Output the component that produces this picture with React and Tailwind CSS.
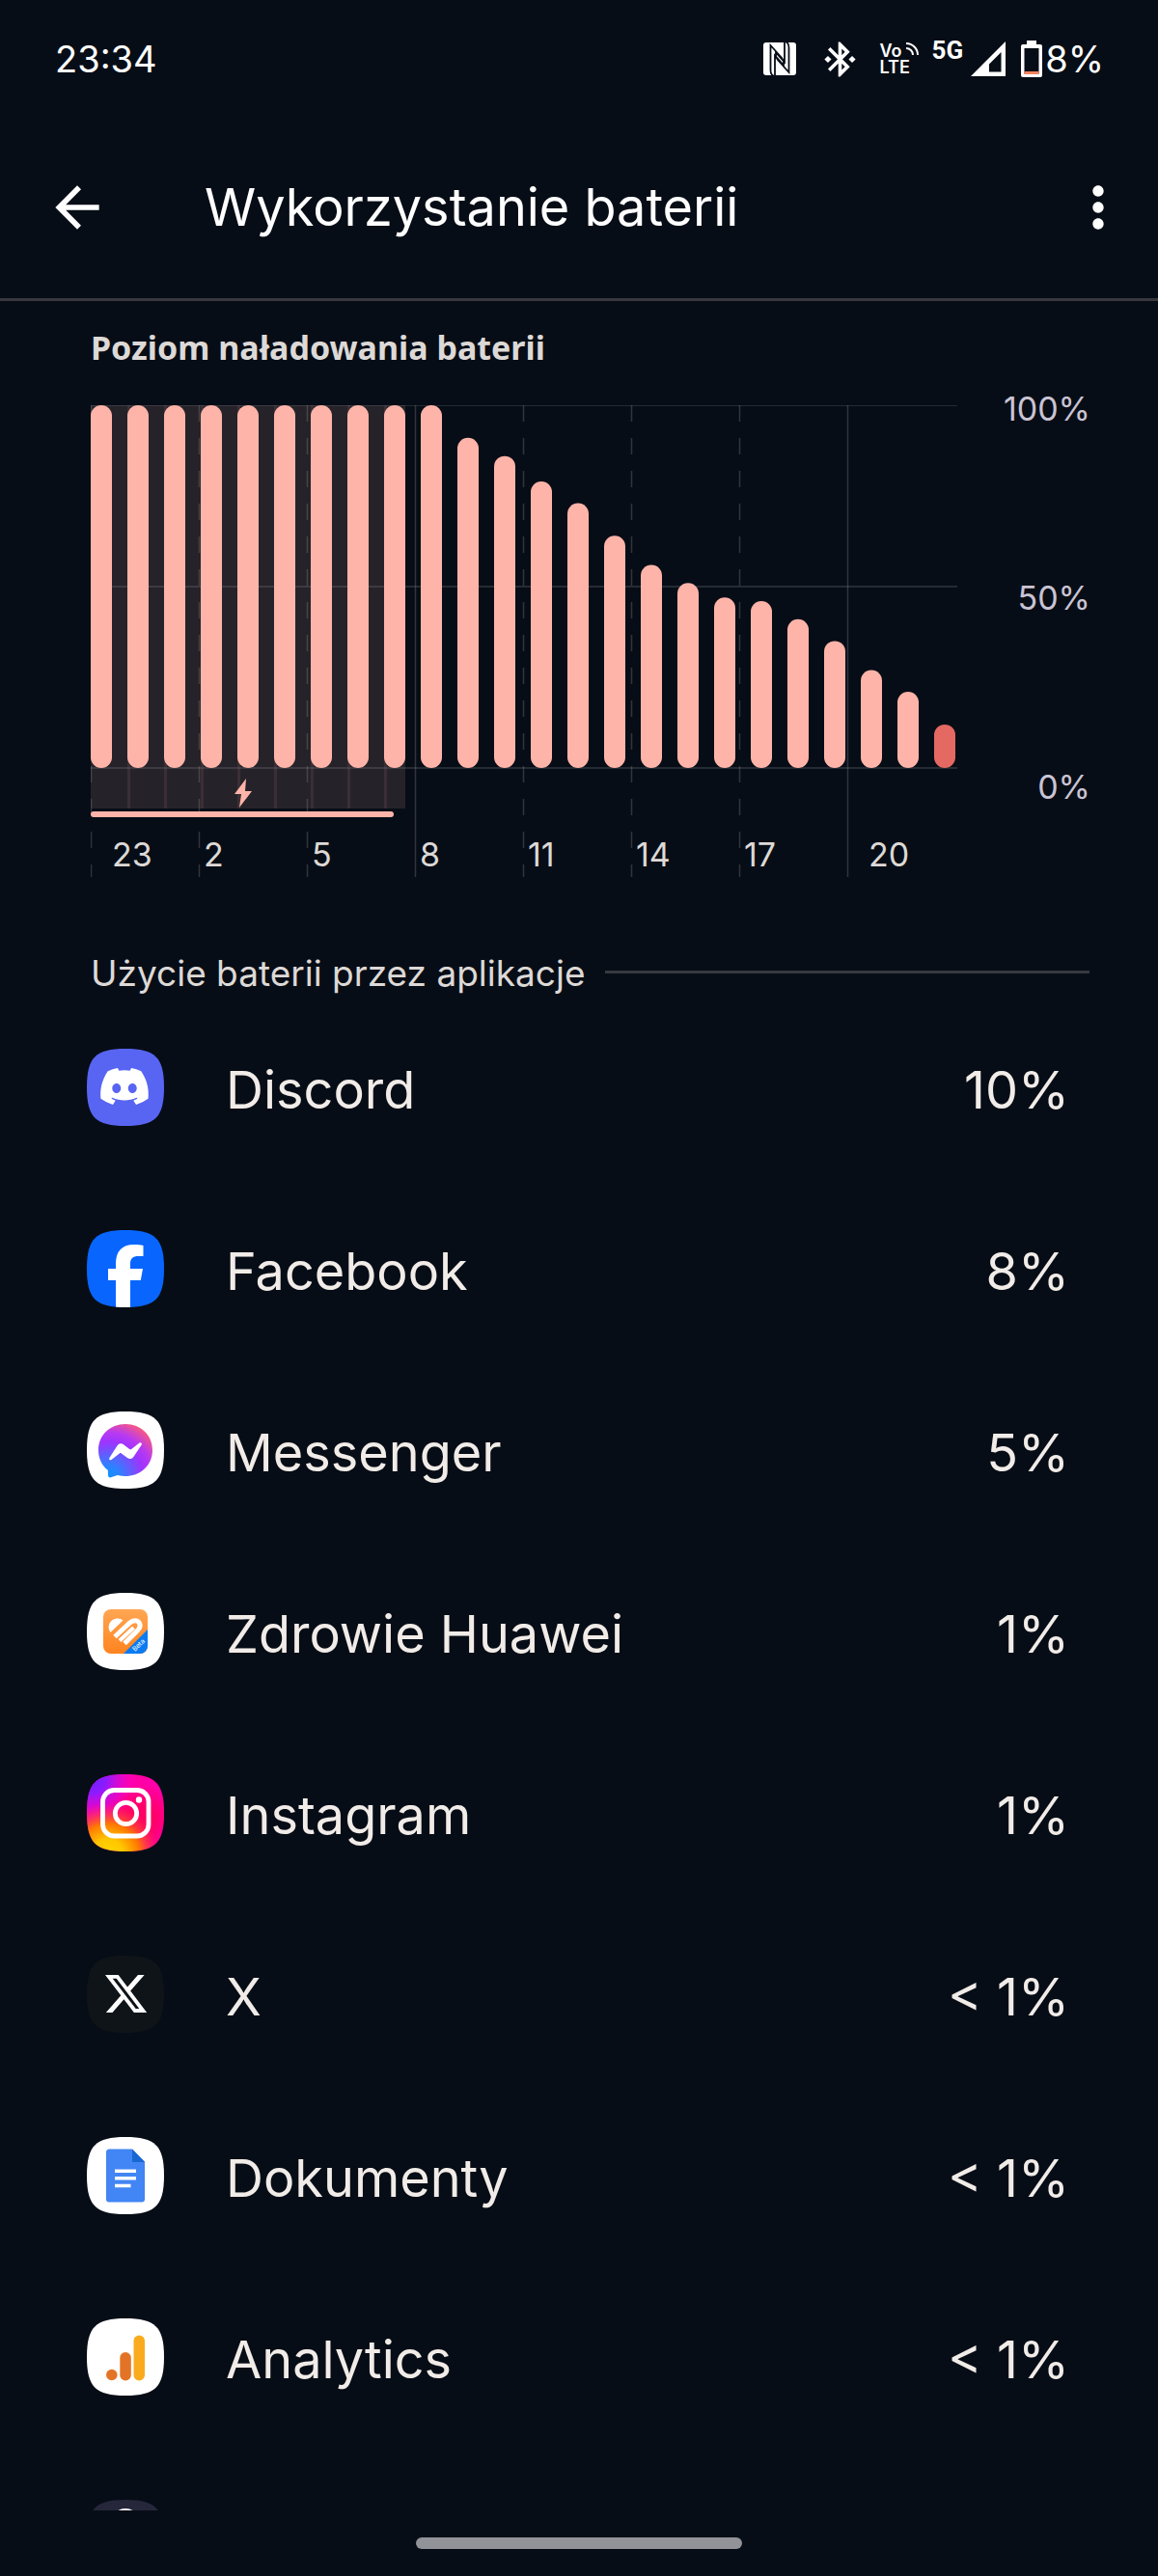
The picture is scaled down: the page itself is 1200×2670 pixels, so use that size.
import { FaDiscord } from 'react-icons/fa';
import { MdArrowBack, MdBluetoothConnected, MdMoreVert } from 'react-icons/md';

const levels = [
  100, 100, 100, 100, 100, 100, 100, 100, 100, 100, 91, 86,
  79, 73, 64, 56, 51, 47, 46, 41, 35, 27, 21, 12,
];

const hours = [
  { label: '23', pad: 'pl-[22px]' },
  { label: '2', pad: 'pl-[5px]' },
  { label: '5', pad: 'pl-[5px]' },
  { label: '8', pad: 'pl-[5px]', solid: true },
  { label: '11', pad: 'pl-[5px]' },
  { label: '14', pad: 'pl-[5px]' },
  { label: '17', pad: 'pl-[5px]' },
  { label: '20', pad: 'pl-[22px]', solid: true },
];

function Tile({ id, fill, children }) {
  return (
    <svg viewBox="0 0 80 80" className="block w-20 h-20 shrink-0" aria-hidden="true">
      <defs>
        <clipPath id={`tile-${id}`}>
          <path d="M0 40C0 9 9 0 40 0S80 9 80 40 71 80 40 80 0 71 0 40Z" />
        </clipPath>
      </defs>
      <g clipPath={`url(#tile-${id})`}>
        <rect width="80" height="80" fill={fill} />
        {children}
      </g>
    </svg>
  );
}

function DiscordIcon() {
  return (
    <Tile id="discord" fill="#5865f2">
      <FaDiscord x="12" y="12" width="56" height="56" color="#fff" />
    </Tile>
  );
}

function FacebookIcon() {
  return (
    <Tile id="facebook" fill="#0866ff">
      <path
        d="M30 80V52h-8V40h8v-5c0-13 6-20 19-20 3 0 7 .3 9.500 1v11h-5c-6 0-8.500 2.500-8.500 8v5h13l-2.200 12H45v28z"
        fill="#fff"
      />
    </Tile>
  );
}

function MessengerIcon() {
  return (
    <Tile id="messenger" fill="#fff">
      <defs>
        <radialGradient id="messenger-fill" gradientUnits="userSpaceOnUse" cx="22" cy="68" r="62">
          <stop offset="0" stopColor="#0a94ff" />
          <stop offset=".2" stopColor="#2f80ff" />
          <stop offset=".6" stopColor="#a033ff" />
          <stop offset=".75" stopColor="#b83af0" />
          <stop offset="1" stopColor="#ff5b78" />
        </radialGradient>
      </defs>
      <path
        d="M40 13c16 0 28 11.500 28 27S56 67 40 67c-3 0-5.700-.4-8.300-1.100L25 68.300c-1.500.6-3-.3-3-2l-.2-5.500C15.500 56 12 48.600 12 40c0-15.500 12-27 28-27z"
        fill="url(#messenger-fill)"
      />
      <path
        d="M23.300 48.200l8.300-13a4.300 4.300 0 0 1 6.100-1.200l6.500 4.900c.6.500 1.400.5 2 0l8.300-6.300c1.300-1 3 .4 2.200 1.800l-8.300 12.600a4.300 4.300 0 0 1-6.100 1.200L35.800 43.400c-.6-.4-1.400-.4-2 0L25.500 50c-1.300 1-3-.4-2.200-1.800z"
        fill="#fff"
      />
    </Tile>
  );
}

function HealthIcon() {
  return (
    <Tile id="health" fill="#fff">
      <defs>
        <linearGradient id="health-fill" x1="0" y1="0" x2="0" y2="1">
          <stop offset="0" stopColor="#ffa654" />
          <stop offset="1" stopColor="#ff831f" />
        </linearGradient>
        <clipPath id="health-clip">
          <rect x="17" y="17" width="46" height="46" rx="8" />
        </clipPath>
      </defs>
      <g clipPath="url(#health-clip)">
        <rect x="17" y="17" width="46" height="46" fill="url(#health-fill)" />
        <path d="M24.500 41C20 35 24 27 31 26.500c3-.2 5 .8 6.500 2z" fill="#fff" />
        <path d="M29 45.500L44.500 31c3.500-3.300 8-3 9.800 0 1.700 3 .7 5.500-1.800 8L39 52.500" fill="none" stroke="#fff" strokeWidth="5" />
        <path d="M34 49.500L48.500 36" stroke="#fff" strokeWidth="4" />
        <path d="M38 63L63 38v25z" fill="#0a7bf2" />
        <text x="50" y="61" transform="rotate(-45 50 61)" fontSize="7" fill="#fff" fontFamily="Inter, sans-serif">
          Beta
        </text>
      </g>
    </Tile>
  );
}

function InstagramIcon() {
  return (
    <Tile id="instagram" fill="#ff00a8">
      <defs>
        <radialGradient id="ig-red" gradientUnits="userSpaceOnUse" cx="56" cy="46" r="36">
          <stop offset="0" stopColor="#ff0060" />
          <stop offset=".4" stopColor="#ff0068" />
          <stop offset="1" stopColor="#ff0068" stopOpacity="0" />
        </radialGradient>
        <radialGradient id="ig-violet" gradientUnits="userSpaceOnUse" cx="4" cy="4" r="46">
          <stop offset="0" stopColor="#6a20ff" />
          <stop offset=".35" stopColor="#8c1bff" />
          <stop offset="1" stopColor="#f000e0" stopOpacity="0" />
        </radialGradient>
        <radialGradient id="ig-yellow" gradientUnits="userSpaceOnUse" cx="22" cy="84" r="54">
          <stop offset="0" stopColor="#ffd600" />
          <stop offset=".3" stopColor="#ffc800" />
          <stop offset=".6" stopColor="#ff7a00" />
          <stop offset="1" stopColor="#ff2a50" stopOpacity="0" />
        </radialGradient>
      </defs>
      <rect width="80" height="80" fill="url(#ig-red)" />
      <rect width="80" height="80" fill="url(#ig-violet)" />
      <rect width="80" height="80" fill="url(#ig-yellow)" />
      <g fill="none" stroke="#fff" strokeWidth="4.800">
        <rect x="16.500" y="16.500" width="47.500" height="47.500" rx="12" />
        <circle cx="40.500" cy="40.500" r="11.200" />
      </g>
      <circle cx="54" cy="26.500" r="3.200" fill="#fff" />
    </Tile>
  );
}

function XIcon() {
  return (
    <Tile id="x" fill="#0f1419">
      <path
        transform="translate(16.500 15.500) scale(2)"
        d="M18.244 2.250h3.308l-7.227 8.260 8.502 11.240H16.170l-5.214-6.817L4.990 21.750H1.680l7.730-8.835L1.254 2.250H8.080l4.713 6.231zm-1.161 17.520h1.833L7.084 4.126H5.117z"
        fill="#fff"
      />
    </Tile>
  );
}

function DocsIcon() {
  return (
    <Tile id="docs" fill="#fff">
      <path d="M23.500 12.500H47L60 25.500v39a3 3 0 0 1-3 3H23a3 3 0 0 1-3-3v-49a3 3 0 0 1 3.500-3z" fill="#4285f4" />
      <path d="M47 12.500L60 26H47z" fill="#1967d2" />
      <path d="M29 35.200h22M29 42.800h22M29 50.500h16.500" stroke="#fff" strokeWidth="3.400" />
    </Tile>
  );
}

function AnalyticsIcon() {
  return (
    <Tile id="analytics" fill="#fff">
      <rect x="48.500" y="17.500" width="11.500" height="47" rx="5.750" fill="#f9ab1d" />
      <rect x="34.300" y="35" width="11.500" height="29.500" rx="5.750" fill="#e37427" />
      <circle cx="25.800" cy="58.500" r="5.800" fill="#e37427" />
    </Tile>
  );
}

function NextIcon() {
  return (
    <Tile id="next" fill="#26273b">
      <circle cx="40" cy="24" r="15" fill="#fff" />
    </Tile>
  );
}

const apps = [
  { name: 'Discord', usage: '10%', Icon: DiscordIcon },
  { name: 'Facebook', usage: '8%', Icon: FacebookIcon },
  { name: 'Messenger', usage: '5%', Icon: MessengerIcon },
  { name: 'Zdrowie Huawei', usage: '1%', Icon: HealthIcon },
  { name: 'Instagram', usage: '1%', Icon: InstagramIcon },
  { name: 'X', usage: '< 1%', Icon: XIcon },
  { name: 'Dokumenty', usage: '< 1%', Icon: DocsIcon },
  { name: 'Analytics', usage: '< 1%', Icon: AnalyticsIcon },
];

function NfcIcon() {
  return (
    <svg viewBox="0 0 34 34" className="w-[34px] h-[34px]" aria-hidden="true">
      <rect width="34" height="34" rx="3" fill="#fff" />
      <g fill="none" stroke="#070d16" strokeWidth="1.800">
        <path d="M10.500 34.500c-2.500-1-3-3-3-6V3L20 17" />
        <path d="M23.500-.5c2.500 1 3 3 3 6V31L14 17" />
        <path d="M12 34V13.500l9 10V17" />
        <path d="M22 0v20.500l-9-10V17" />
      </g>
    </svg>
  );
}

function StatusBar() {
  return (
    <div className="flex items-center justify-between h-[122px] pl-[57px] pr-[56px] text-white">
      <span className="text-[38px] leading-none">23:34</span>
      <div className="flex items-center">
        <NfcIcon />
        <MdBluetoothConnected className="w-[43px] h-[43px] ml-6" />
        <div className="relative flex flex-col w-10 ml-5 text-[18px] leading-[17px] font-semibold">
          <span>Vo</span>
          <span>LTE</span>
          <svg viewBox="0 0 14 14" className="absolute right-0 top-0 w-[14px] h-[14px]" fill="none" stroke="#fff" strokeWidth="2" aria-hidden="true">
            <path d="M1 1a12 12 0 0 1 12 12M1 6a7 7 0 0 1 7 7" />
          </svg>
        </div>
        <span className="self-start ml-[14px] text-[26px] leading-6 font-bold font-['Roboto',sans-serif]">5G</span>
        <svg viewBox="0 0 36 36" className="w-9 h-9 ml-2" aria-hidden="true">
          <path d="M0 36L36 0v36zM19 31.500h12.500V11L19 23.500z" fill="#fff" fillRule="evenodd" />
        </svg>
        <svg viewBox="0 0 22 38" className="w-[22px] h-[38px] ml-4" aria-hidden="true">
          <path d="M6 0h10v4h4a2 2 0 0 1 2 2v30a2 2 0 0 1-2 2H2a2 2 0 0 1-2-2V6a2 2 0 0 1 2-2h4zM3.500 8v26.500h15V8z" fill="#fff" fillRule="evenodd" />
          <path d="M3.500 32h15v3h-15z" fill="#f4845f" />
        </svg>
        <span className="ml-[3px] text-[38px] leading-none">8%</span>
      </div>
    </div>
  );
}

function BatteryChart() {
  return (
    <div className="flex pl-[94px] pr-[70px] mt-[38px]">
      <div className="relative w-[898px] h-[489px] text-[#ddd9d6]">
        {/* charging period */}
        <svg viewBox="0 0 898 489" className="absolute inset-0 w-full h-full" aria-hidden="true">
          <rect width="326" height="418" fill="#252329" />
          {[1, 2, 3, 4, 5, 6, 7, 8].map((i) => (
            <rect key={i} x={i * 38} width="3" height="418" fill="#3b2e36" />
          ))}
          <g stroke="#8c8890" strokeOpacity=".32" strokeWidth="1.500">
            {[0, 188, 376].map((y) => (
              <path key={y} d={`M0 ${y}H898`} />
            ))}
            {hours.map((h, i) => (
              <path key={h.label} d={`M${i * 112 + 0.5} 0V489`} strokeDasharray={h.solid ? 'none' : '17 17'} />
            ))}
          </g>
          {levels.map((level, i) => (
            <rect
              key={i}
              x={i * 38}
              y={376 - level * 3.76}
              width="22"
              height={level * 3.76}
              rx="11"
              fill={i === 23 ? '#e46962' : '#ffb4a9'}
            />
          ))}
          <path d="M161 387L149 403h7l-2 14 13-17h-7z" fill="#ffb4a9" />
          <rect y="421" width="314" height="6" rx="3" fill="#ffb4a9" />
        </svg>
        <div className="absolute inset-x-0 bottom-0 flex h-10 text-[34px] leading-none">
          {hours.map((h) => (
            <span key={h.label} className={`w-28 shrink-0 ${h.pad}`}>{h.label}</span>
          ))}
        </div>
      </div>
      <div className="flex flex-col justify-between flex-1 h-[432px] -mt-4 text-right text-[34px] leading-10 text-[#cac4d4]">
        <span>100%</span>
        <span>50%</span>
        <span>0%</span>
      </div>
    </div>
  );
}

export default function App() {
  return (
    <div className="flex flex-col w-full bg-[#070d16] font-['Inter',sans-serif]">
      <StatusBar />
      <header className="flex items-center h-[190px] pb-px pl-[46px] pr-7 border-b-3 border-[#37373d] text-white">
        <button type="button" aria-label="Wstecz">
          <MdArrowBack className="w-[68px] h-[68px]" />
        </button>
        <h1 className="flex-1 ml-[98px] text-[54px] leading-[66px]">Wykorzystanie baterii</h1>
        <button type="button" aria-label="Więcej opcji">
          <MdMoreVert className="w-[68px] h-[68px]" />
        </button>
      </header>

      <main>
        <h2 className="pl-[94px] mt-[26px] text-[34px] leading-[44px] font-bold text-[#ddd9d6] font-['Noto_Sans',sans-serif]">
          Poziom naładowania baterii
        </h2>
        <BatteryChart />

        <div className="flex items-center gap-5 pl-[94px] pr-[71px] mt-[74px] h-12">
          <h2 className="pt-1 text-[37px] leading-[44px] text-[#ddd9d6]">Użycie baterii przez aplikacje</h2>
          <div className="flex-1 h-[3px] bg-[#37393e]" />
        </div>

        <ul className="mt-14">
          {apps.map(({ name, usage, Icon }) => (
            <li key={name} className="flex items-center h-20 mb-[108px] pl-[90px] pr-[92px] text-[54px] leading-[66px] text-[#f1ece8]">
              <Icon />
              <span className="flex-1 pt-[6px] ml-16">{name}</span>
              <span className="pt-[6px]">{usage}</span>
            </li>
          ))}
          <li className="h-[11px] pl-[90px] overflow-hidden">
            <NextIcon />
          </li>
        </ul>
      </main>

      <div className="flex justify-center pt-7 pb-7">
        <div className="w-[338px] h-3 rounded-md bg-[#919398]" />
      </div>
    </div>
  );
}
